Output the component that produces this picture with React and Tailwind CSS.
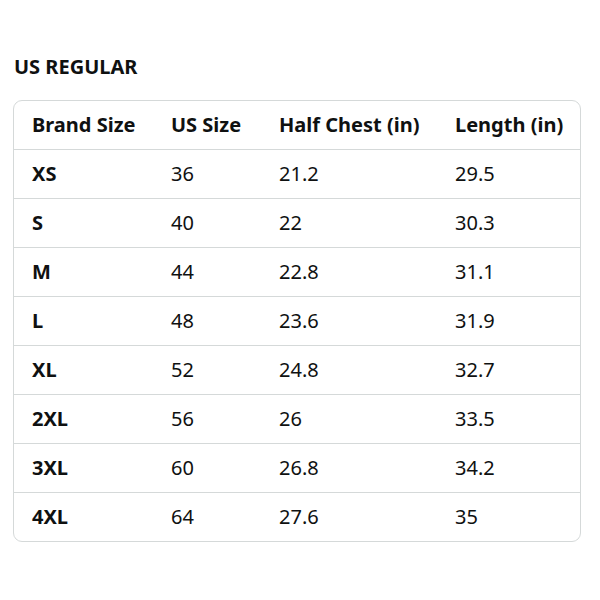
const rows = [
  ['XS', '36', '21.2', '29.5'],
  ['S', '40', '22', '30.3'],
  ['M', '44', '22.8', '31.1'],
  ['L', '48', '23.6', '31.9'],
  ['XL', '52', '24.8', '32.7'],
  ['2XL', '56', '26', '33.5'],
  ['3XL', '60', '26.8', '34.2'],
  ['4XL', '64', '27.6', '35'],
];

export default function App() {
  return (
    <div className="w-[600px] h-[600px] bg-white text-[#0f1111] font-['Noto_Sans',sans-serif] pt-[53px] pl-[13px]">
      <h2 className="text-[20px] font-bold leading-[28px] pl-px">US REGULAR</h2>
      <div className="mt-[19px] w-[568px] border border-[#d5d9d9] rounded-[9px] overflow-hidden">
        <div className="grid grid-cols-[157px_108px_176px_1fr] h-[48px] items-center text-[20px] font-bold">
          <div className="pl-[18px]">Brand Size</div>
          <div>US Size</div>
          <div>Half Chest (in)</div>
          <div>Length (in)</div>
        </div>
        {rows.map((r) => (
          <div
            key={r[0]}
            className="grid grid-cols-[157px_108px_176px_1fr] h-[49px] items-center text-[20px] border-t border-[#d5d9d9]"
          >
            <div className="pl-[18px] font-bold">{r[0]}</div>
            <div>{r[1]}</div>
            <div>{r[2]}</div>
            <div>{r[3]}</div>
          </div>
        ))}
      </div>
    </div>
  );
}
